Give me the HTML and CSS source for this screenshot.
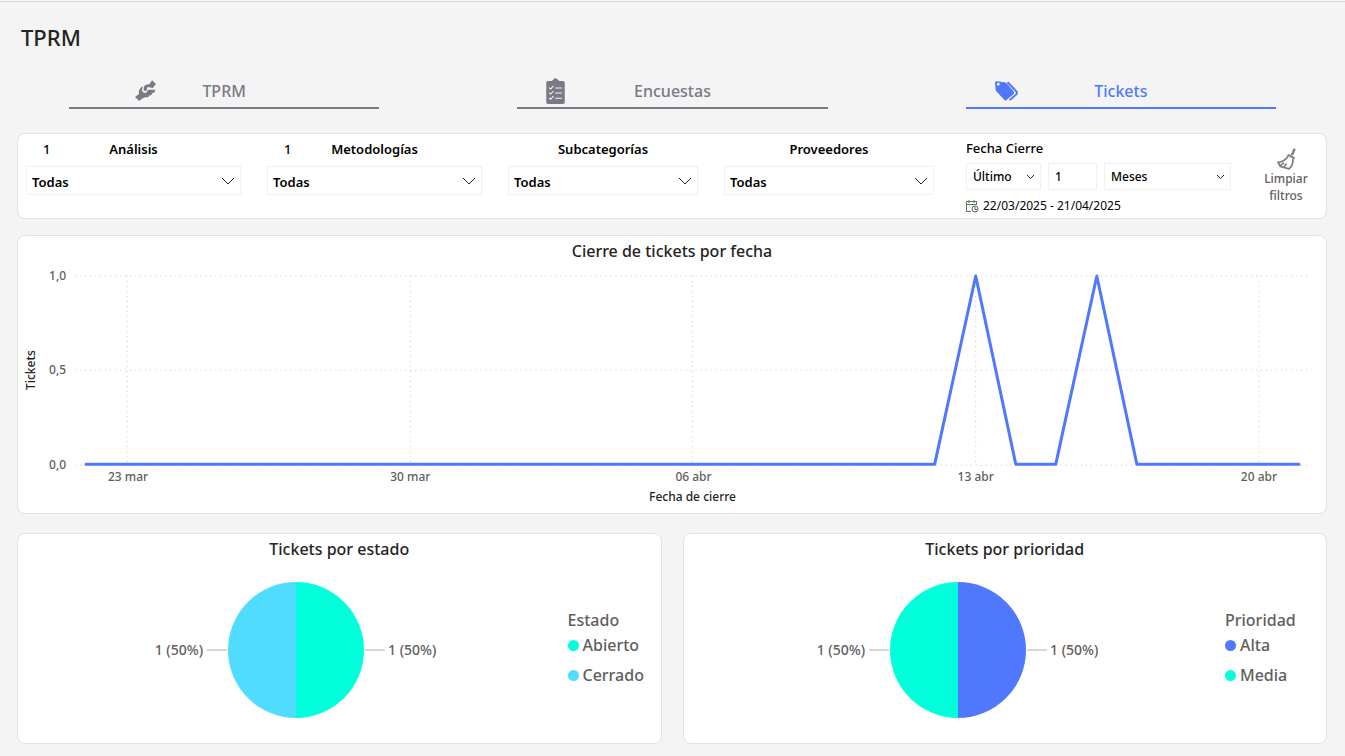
FILE: index.html
```html
<!DOCTYPE html>
<html lang="es">
<head>
<meta charset="utf-8">
<title>TPRM</title>
<meta name="viewport" content="width=device-width, initial-scale=1">
<link rel="stylesheet" href="styles.css">
</head>
<body>
<main class="page">
  <h1 class="page-title">TPRM</h1>

  <nav class="tabs" aria-label="Secciones">
    <button type="button" class="tab">
      <svg class="tab-icon tab-icon-inset" width="21" height="21" viewBox="0 0 64 64" fill="currentColor" aria-hidden="true">
        <path d="M52 1 64 12 54 24 44 22H37L36 31Q31 36 26 31L28 18Q32 13 44 13Z"/>
        <path d="M12 32 19 21 24 20 21 33Q25 41 34 39L40 30H62L59 38 52 40 50 46 44 47 41 52 28 53 22 56 13 64 0 52 12 43Z"/>
      </svg>
      <span class="tab-label">TPRM</span>
    </button>
    <button type="button" class="tab">
      <svg class="tab-icon" width="19" height="26" viewBox="0 0 54 76" aria-hidden="true">
        <path fill="currentColor" d="M5 9H16L20 5Q27-3 34 5L38 9H49Q54 9 54 14V71Q54 76 49 76H5Q0 76 0 71V14Q0 9 5 9Z"/>
        <path fill="none" stroke="#f4f4f4" stroke-width="3" d="M8 28l5 4 8-9M26 29h20M8 43l5 4 8-9M26 44h20M8 58l5 4 8-9M26 59h20"/>
      </svg>
      <span class="tab-label">Encuestas</span>
    </button>
    <button type="button" class="tab tab-active" aria-current="page">
      <svg class="tab-icon" width="23" height="20" viewBox="0 0 70 60" aria-hidden="true">
        <path fill="currentColor" fill-rule="evenodd" d="M4 0 30 3Q33 4 35 6L56 30Q60 35 56 40L36 57Q32 61 28 57L4 31Q2 29 2 26L0 4Q0 0 4 0ZM10 5a4 4 0 1 0 0 9 4 4 0 1 0 0-9Z"/>
        <path fill="none" stroke="currentColor" stroke-width="6" stroke-linecap="round" stroke-linejoin="round" d="M40 5 64 30Q69 36 64 41L47 56"/>
      </svg>
      <span class="tab-label">Tickets</span>
    </button>
  </nav>

  <section class="card filters" aria-label="Filtros">
    <div class="filter">
      <div class="filter-head"><span class="filter-count">1</span><label for="analisis">Análisis</label></div>
      <div class="select-box">
        <select id="analisis"><option>Todas</option></select>
        <svg class="chevron" width="14" height="8" viewBox="0 0 14 8" aria-hidden="true"><path d="M1 1 7 7 13 1"/></svg>
      </div>
    </div>
    <div class="filter">
      <div class="filter-head"><span class="filter-count">1</span><label for="metodologias">Metodologías</label></div>
      <div class="select-box">
        <select id="metodologias"><option>Todas</option></select>
        <svg class="chevron" width="14" height="8" viewBox="0 0 14 8" aria-hidden="true"><path d="M1 1 7 7 13 1"/></svg>
      </div>
    </div>
    <div class="filter">
      <div class="filter-head"><span class="filter-count"></span><label for="subcategorias">Subcategorías</label></div>
      <div class="select-box">
        <select id="subcategorias"><option>Todas</option></select>
        <svg class="chevron" width="14" height="8" viewBox="0 0 14 8" aria-hidden="true"><path d="M1 1 7 7 13 1"/></svg>
      </div>
    </div>
    <div class="filter">
      <div class="filter-head"><span class="filter-count"></span><label for="proveedores">Proveedores</label></div>
      <div class="select-box">
        <select id="proveedores"><option>Todas</option></select>
        <svg class="chevron" width="14" height="8" viewBox="0 0 14 8" aria-hidden="true"><path d="M1 1 7 7 13 1"/></svg>
      </div>
    </div>
    <fieldset class="date-filter">
      <legend>Fecha Cierre</legend>
      <div class="date-row">
        <div class="select-box select-small">
          <select aria-label="Periodo relativo"><option>Último</option></select>
          <svg class="chevron" width="9" height="6" viewBox="0 0 9 6" aria-hidden="true"><path d="M1 1 4.500 4.500 8 1"/></svg>
        </div>
        <input class="date-amount" type="text" inputmode="numeric" value="1" aria-label="Cantidad">
        <div class="select-box select-small">
          <select aria-label="Unidad"><option>Meses</option></select>
          <svg class="chevron" width="9" height="6" viewBox="0 0 9 6" aria-hidden="true"><path d="M1 1 4.500 4.500 8 1"/></svg>
        </div>
      </div>
      <p class="date-range">
        <svg width="13" height="13" viewBox="0 0 13 13" fill="none" aria-hidden="true">
          <path stroke="#4f7d5c" d="M5 11.500H.5V1.500H10.500V5M.5 4.500H10.500M3 0V3M8 0V3"/>
          <circle cx="9" cy="9" r="3" stroke="#605e5c"/>
          <path stroke="#605e5c" d="M9 7V9.500H11"/>
        </svg>
        22/03/2025 - 21/04/2025
      </p>
    </fieldset>
    <button type="button" class="clear-button">
      <svg class="broom" width="19" height="22" viewBox="0 0 56 64" fill="none" stroke="currentColor" aria-hidden="true">
        <path stroke-width="7" d="M52 2 44 21"/>
        <path stroke-width="6" d="M31 19 52 30"/>
        <path stroke-width="5" stroke-linejoin="round" d="M33 24Q22 40 3 42L10 54 36 61Q48 50 47 31M20 56 28 45M10 52 20 43"/>
      </svg>
      <span>Limpiar filtros</span>
    </button>
  </section>

  <section class="card line-card">
    <h2 class="card-title">Cierre de tickets por fecha</h2>
    <svg class="line-chart" viewBox="0 0 1307 250" role="img" aria-label="Tickets cerrados por fecha de cierre">
      <path class="grid-line" d="M57 13H1288M57 107H1288M57 202H1288M109 13V202M392 13V202M674 13V202M957 13V202M1240 13V202"/>
      <path class="series" d="M68 201H916L957 13 997 201H1037L1078 13 1118 201H1280"/>
      <g class="axis-text" text-anchor="end">
        <text x="48" y="17">1,0</text>
        <text x="48" y="111">0,5</text>
        <text x="48" y="206">0,0</text>
      </g>
      <g class="axis-text" text-anchor="middle">
        <text x="110" y="218">23 mar</text>
        <text x="392" y="218">30 mar</text>
        <text x="675" y="218">06 abr</text>
        <text x="957" y="218">13 abr</text>
        <text x="1240" y="218">20 abr</text>
      </g>
      <g class="axis-title" text-anchor="middle">
        <text x="674" y="238">Fecha de cierre</text>
        <text transform="translate(17 107) rotate(-90)">Tickets</text>
      </g>
    </svg>
  </section>

  <div class="pie-row">
    <section class="card pie-card">
      <h2 class="card-title">Tickets por estado</h2>
      <div class="pie-body">
        <svg class="pie" width="288" height="136" viewBox="0 0 288 136" role="img" aria-label="Abierto 1 (50%), Cerrado 1 (50%)">
          <path class="fill-aqua" d="M144 0a68 68 0 0 1 0 136Z"/>
          <path class="fill-sky" d="M144 0a68 68 0 0 0 0 136Z"/>
          <path class="leader" d="M55 68H75M213 68H233"/>
          <text x="51" y="73" text-anchor="end">1 (50%)</text>
          <text x="236" y="73">1 (50%)</text>
        </svg>
        <div class="legend">
          <h3 class="legend-title">Estado</h3>
          <ul>
            <li><span class="dot dot-aqua"></span>Abierto</li>
            <li><span class="dot dot-sky"></span>Cerrado</li>
          </ul>
        </div>
      </div>
    </section>
    <section class="card pie-card">
      <h2 class="card-title">Tickets por prioridad</h2>
      <div class="pie-body">
        <svg class="pie" width="288" height="136" viewBox="0 0 288 136" role="img" aria-label="Alta 1 (50%), Media 1 (50%)">
          <path class="fill-blue" d="M144 0a68 68 0 0 1 0 136Z"/>
          <path class="fill-aqua" d="M144 0a68 68 0 0 0 0 136Z"/>
          <path class="leader" d="M55 68H75M213 68H233"/>
          <text x="51" y="73" text-anchor="end">1 (50%)</text>
          <text x="236" y="73">1 (50%)</text>
        </svg>
        <div class="legend legend-wide">
          <h3 class="legend-title">Prioridad</h3>
          <ul>
            <li><span class="dot dot-blue"></span>Alta</li>
            <li><span class="dot dot-aqua"></span>Media</li>
          </ul>
        </div>
      </div>
    </section>
  </div>
</main>
</body>
</html>
```
FILE: styles.css
```css
:root {
  --blue: #4f78ff;
  --aqua: #00ffda;
  --sky: #50dcff;
  --gray: #7a7985;
  --ink: #252423;
  --muted: #605e5c;
  --line: #dfe5e3;
}

* {
  box-sizing: border-box;
}

body {
  margin: 0;
  padding-top: 1px;
  background: #f4f4f4;
  color: var(--ink);
  font-family: "Noto Sans", "Open Sans", sans-serif;
}

h1, h2, h3, p, ul {
  margin: 0;
  padding: 0;
  font-weight: 500;
}

ul {
  list-style: none;
}

button, input, select {
  margin: 0;
  font: inherit;
  color: inherit;
}

.page {
  border-top: 1px solid #d5dcda;
  padding: 19px 18px 13px 17px;
}

.page-title {
  padding-left: 4px;
  font-size: 22px;
  line-height: 32px;
}

/* Tabs */

.tabs {
  display: grid;
  grid-template-columns: repeat(3, minmax(0, 1fr));
  gap: 138px;
  margin: 21px 51px 24px 52px;
}

.tab {
  display: grid;
  grid-template-columns: 1fr auto 1fr;
  align-items: center;
  height: 35px;
  padding: 0;
  border: 0;
  border-bottom: 2px solid var(--gray);
  background: none;
  color: var(--gray);
  font-size: 16px;
  font-weight: 500;
  cursor: pointer;
}

.tab-active {
  border-color: var(--blue);
  color: var(--blue);
}

.tab-icon {
  margin-left: 29px;
}

.tab-icon-inset {
  margin-left: 66px;
}

/* Cards */

.card {
  border: 1px solid var(--line);
  border-radius: 8px;
  background: #fff;
}

.card-title {
  font-size: 16px;
  line-height: 24px;
  text-align: center;
}

/* Filters */

.filters {
  display: grid;
  grid-template-columns: 215fr 215fr 190fr 210fr 271fr 58px;
  gap: 26px;
  padding: 5px 11px 3px 8px;
  color: #000;
}

.filter-head {
  display: grid;
  grid-template-columns: 1fr auto 1fr;
  margin-bottom: 7px;
  font-size: 13px;
  font-weight: 600;
  line-height: 20px;
}

.filter-count {
  padding-left: 17px;
  font-weight: 500;
}

.select-box {
  position: relative;
}

.select-box select {
  display: block;
  width: 100%;
  height: 29px;
  padding: 3px 24px 0 5px;
  border: 1px solid #f0f0f0;
  border-radius: 0;
  background: #fff;
  font-size: 13px;
  font-weight: 600;
  appearance: none;
}

.chevron {
  position: absolute;
  top: 50%;
  right: 6px;
  transform: translateY(-50%);
  fill: none;
  stroke: #252423;
  pointer-events: none;
}

.date-filter {
  min-width: 0;
  margin: 0;
  padding: 0 0 0 6px;
  border: 0;
}

.date-filter legend {
  padding: 0;
  font-size: 13px;
  font-weight: 500;
  line-height: 18px;
}

.date-row {
  display: grid;
  grid-template-columns: 75fr 49fr 127fr;
  gap: 7px;
  margin-top: 6px;
}

.select-small select,
.date-amount {
  height: 27px;
  padding: 0 20px 0 6px;
  border: 1px solid #f0f0f0;
  background: #fff;
  font-size: 12px;
  font-weight: 500;
}

.date-amount {
  width: 100%;
  padding-right: 6px;
}

.date-range {
  display: flex;
  align-items: center;
  gap: 4px;
  margin-top: 7px;
  font-size: 12px;
  font-weight: 400;
  line-height: 18px;
}

.clear-button {
  display: flex;
  flex-direction: column;
  align-items: center;
  padding: 9px 0 0;
  border: 0;
  background: none;
  color: var(--muted);
  font-size: 12px;
  font-weight: 500;
  line-height: 17px;
  cursor: pointer;
}

.broom {
  color: #7d7c84;
}

/* Line chart */

.line-card {
  margin-top: 16px;
  padding-top: 3px;
}

.line-chart {
  display: block;
  width: 100%;
  height: auto;
}

.grid-line {
  fill: none;
  stroke: #c8c8c8;
  stroke-dasharray: 1 4;
}

.series {
  fill: none;
  stroke: var(--blue);
  stroke-width: 3;
  stroke-linejoin: round;
  stroke-linecap: round;
}

.axis-text {
  fill: var(--muted);
  font-size: 12px;
  font-weight: 500;
}

.axis-title {
  fill: var(--ink);
  font-size: 12px;
  font-weight: 500;
}

/* Pie charts */

.pie-row {
  display: grid;
  grid-template-columns: repeat(2, minmax(0, 1fr));
  gap: 21px;
  margin-top: 19px;
}

.pie-card {
  padding: 3px 0 25px;
}

.pie-body {
  display: flex;
  align-items: center;
  margin-top: 21px;
  padding-left: 7px;
}

.pie {
  margin: 0 auto;
}

.pie text {
  fill: var(--muted);
  font-size: 14px;
  font-weight: 500;
}

.leader {
  stroke: #b3b0ad;
}

.fill-aqua { fill: var(--aqua); }
.fill-sky { fill: var(--sky); }
.fill-blue { fill: var(--blue); }

.legend {
  width: 93px;
  color: var(--muted);
  font-size: 16px;
}

.legend-wide {
  width: 101px;
}

.legend-title {
  font-size: 16px;
  line-height: 20px;
}

.legend li {
  display: flex;
  align-items: center;
  gap: 4px;
  font-weight: 500;
  line-height: 30px;
}

.dot {
  width: 11px;
  height: 11px;
  border-radius: 50%;
}

.dot-aqua { background: var(--aqua); }
.dot-sky { background: var(--sky); }
.dot-blue { background: var(--blue); }
```
